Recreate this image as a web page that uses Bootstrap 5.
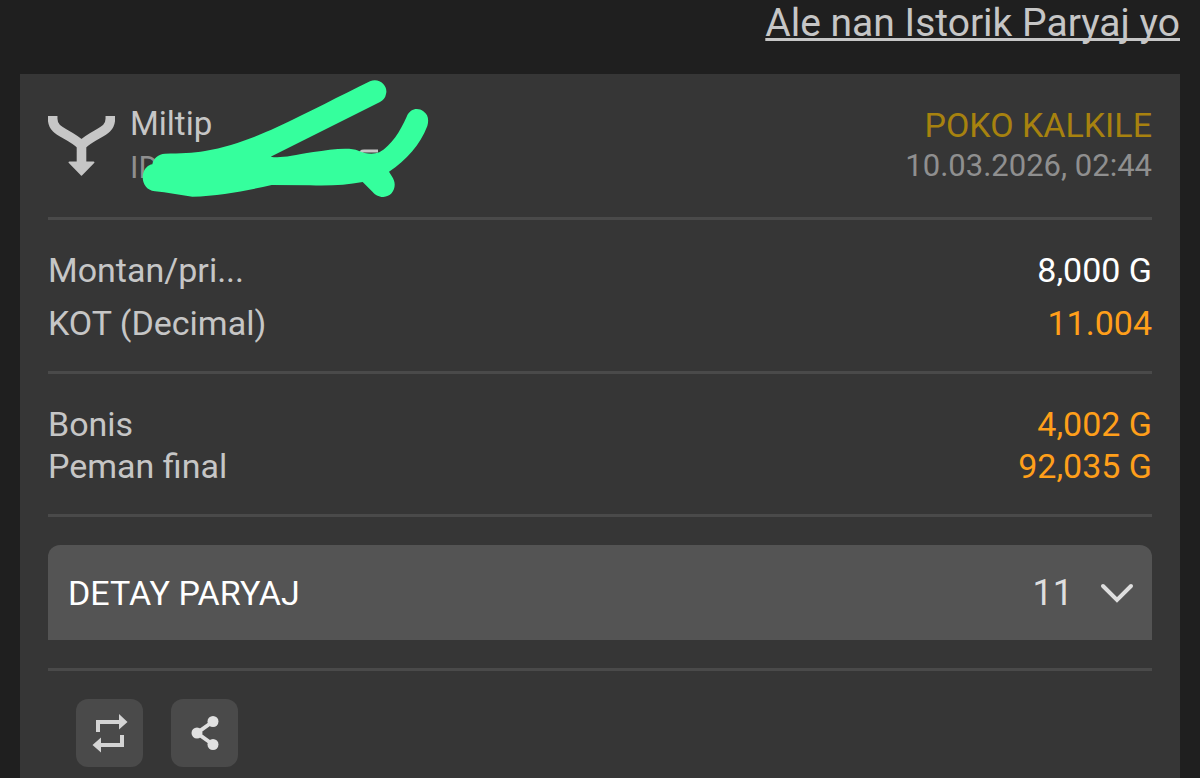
<!DOCTYPE html>
<html lang="ht">
<head>
<meta charset="utf-8">
<meta name="viewport" content="width=device-width, initial-scale=1">
<title>Istorik Paryaj</title>
<link href="https://cdn.jsdelivr.net/npm/bootstrap@5.3.0/dist/css/bootstrap.min.css" rel="stylesheet">
<style>
  body { background: #1f1f1f; color: #c6c6c6; font-family: Roboto, "Liberation Sans", sans-serif; font-size: 34px; line-height: 42px; }
  .page { padding: 0 20px; }
  .top-nav { font-size: 39px; line-height: 46px; }
  .history-link { color: #c6c6c6; text-decoration: underline; text-decoration-thickness: 3px; text-underline-offset: 2px; text-decoration-skip-ink: none; }
  .history-link:hover { color: #fff; }
  .slip { background: #363636; margin-top: 28px; padding: 0 28px; }
  .slip > section { padding: 28px 0; border-bottom: 3px solid #4a4a4a; }
  .slip > .slip-head { padding-bottom: 27px; }
  .slip > .sums { padding: 29px 0 27px; }
  .slip > .slip-actions { border: 0; padding: 28px 28px 11px; gap: 28px; }
  .bet-type { gap: 15px; font-size: 33px; line-height: 44px; }
  .bet-id, .bet-date { color: #8f8f8f; font-size: 31px; }
  .bet-id span { width: 228px; }
  .bet-state { line-height: 40px; }
  .bet-date { line-height: 42px; }
  .pending { color: #a7820f; }
  .scribble { left: 92px; top: -25px; }
  .stake { gap: 11px; }
  .amount { color: #fff; }
  .win { color: #ff9f1a; }
  .details { background: #545454; color: #fff; border-radius: 12px 12px 0 0; height: 95px; padding: 0 18px 0 20px; }
  .details:hover { background: #5c5c5c; }
  .count { color: #dedede; font-size: 36px; gap: 27px; }
  .action { width: 67px; height: 68px; border-radius: 12px; background: #4a4a4a; color: #d4d4d4; }
</style>
</head>
<body>
<div class="page d-flex flex-column min-vh-100">
  <nav class="top-nav text-end"><a class="history-link" href="#">Ale nan Istorik Paryaj yo</a></nav>

  <main class="slip flex-grow-1">
    <section class="slip-head d-flex justify-content-between align-items-center">
      <div class="bet-type position-relative d-flex align-items-center">
        <svg width="67" height="60" viewBox="53 138 202 181" fill="none" stroke="#c6c6c6" stroke-width="29" aria-hidden="true">
          <path d="M67 138v8C67 188 112 186 154 226C196 186 241 188 241 146V138M154 218V280"/>
          <path d="M118 278H190L154 315Z" fill="#c6c6c6" stroke-width="6" stroke-linejoin="round"/>
        </svg>
        <div>
          <div>Miltip</div>
          <div class="bet-id d-flex align-items-center">
            <span>ID</span>
            <svg width="24" height="38" viewBox="0 0 24 38" fill="none" stroke="#c6c6c6" stroke-width="3" aria-hidden="true"><path d="M2 26V6Q2 2 6 2H20"/></svg>
          </div>
        </div>
        <svg class="scribble position-absolute" width="290" height="123" viewBox="330 21 870 369" fill="#35ff9d" aria-hidden="true">
          <path d="M1020 34C1050 22 1075 50 1068 72C1066 84 1060 90 1050 96L722 260C750 265 780 258 850 246C900 238 960 230 985 242C1005 252 1030 254 1048 247C1085 225 1110 185 1130 140C1140 115 1165 112 1180 124C1195 134 1197 150 1192 168C1170 225 1130 270 1077 305L1085 318C1105 345 1090 380 1060 381C1045 381 1035 374 1028 366L998 336C950 345 900 348 840 346L725 345C650 362 570 378 487 380C450 375 410 367 375 364C345 360 335 335 339 312C343 295 355 285 367 283C370 265 385 252 405 251C450 250 490 250 525 243C600 230 680 200 740 172C840 125 930 78 1020 34Z"/>
        </svg>
      </div>
      <div class="bet-state text-end">
        <div class="pending">POKO KALKILE</div>
        <div class="bet-date">10.03.2026, 02:44</div>
      </div>
    </section>

    <section class="sums stake d-flex flex-column">
      <div class="d-flex justify-content-between"><span>Montan/pri...</span><span class="amount">8,000 G</span></div>
      <div class="d-flex justify-content-between"><span>KOT (Decimal)</span><span class="win">11.004</span></div>
    </section>

    <section class="sums">
      <div class="d-flex justify-content-between"><span>Bonis</span><span class="win">4,002 G</span></div>
      <div class="d-flex justify-content-between"><span>Peman final</span><span class="win">92,035 G</span></div>
    </section>

    <section>
      <button type="button" class="details w-100 border-0 d-flex justify-content-between align-items-center">
        <span>DETAY PARYAJ</span>
        <span class="count d-flex align-items-center">11
          <svg width="34" height="20" viewBox="0 0 34 20" fill="none" stroke="#dedede" stroke-width="4" stroke-linecap="round" aria-hidden="true"><path d="M3 3L17 17L31 3"/></svg>
        </span>
      </button>
    </section>

    <section class="slip-actions d-flex">
      <button type="button" class="action border-0 p-0 d-flex align-items-center justify-content-center" aria-label="Repete">
        <svg width="36" height="40" viewBox="0 0 36 40" fill="currentColor" aria-hidden="true">
          <path d="M4 19V7H27V1L35.500 9L27 16.500V11H8V19ZM32 22V34H9V39.500L.5 32L9 24.500V30H28V22Z"/>
        </svg>
      </button>
      <button type="button" class="action border-0 p-0 d-flex align-items-center justify-content-center" aria-label="Pataje">
        <svg width="28" height="36" viewBox="0 0 28 36" fill="#e0e0e0" stroke="#e0e0e0" aria-hidden="true">
          <path d="M22 6.500L6 18L22 29.500" fill="none" stroke-width="4"/>
          <g stroke="none"><circle cx="22" cy="6.500" r="5.500"/><circle cx="6" cy="18" r="5.500"/><circle cx="22" cy="29.500" r="5.500"/></g>
        </svg>
      </button>
    </section>
  </main>
</div>
<script src="https://cdn.jsdelivr.net/npm/bootstrap@5.3.0/dist/js/bootstrap.bundle.min.js"></script>
</body>
</html>
